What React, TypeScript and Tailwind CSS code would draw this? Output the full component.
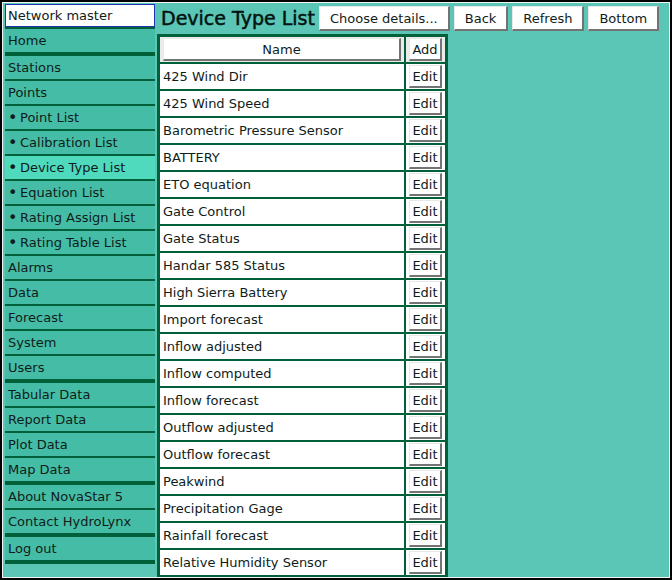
type NavItem = { label: string; sub?: boolean; active?: boolean; groupEnd?: boolean };

const navItems: NavItem[] = [
  { label: "Home", groupEnd: true },
  { label: "Stations" },
  { label: "Points" },
  { label: "Point List", sub: true },
  { label: "Calibration List", sub: true },
  { label: "Device Type List", sub: true, active: true },
  { label: "Equation List", sub: true },
  { label: "Rating Assign List", sub: true },
  { label: "Rating Table List", sub: true },
  { label: "Alarms" },
  { label: "Data" },
  { label: "Forecast" },
  { label: "System" },
  { label: "Users", groupEnd: true },
  { label: "Tabular Data" },
  { label: "Report Data" },
  { label: "Plot Data" },
  { label: "Map Data", groupEnd: true },
  { label: "About NovaStar 5" },
  { label: "Contact HydroLynx", groupEnd: true },
  { label: "Log out", groupEnd: true },
];

const deviceTypes = [
  "425 Wind Dir",
  "425 Wind Speed",
  "Barometric Pressure Sensor",
  "BATTERY",
  "ETO equation",
  "Gate Control",
  "Gate Status",
  "Handar 585 Status",
  "High Sierra Battery",
  "Import forecast",
  "Inflow adjusted",
  "Inflow computed",
  "Inflow forecast",
  "Outflow adjusted",
  "Outflow forecast",
  "Peakwind",
  "Precipitation Gage",
  "Rainfall forecast",
  "Relative Humidity Sensor",
];

const bevel =
  "border-t border-l border-r-2 border-b-2 border-t-[#e6e9e7] border-l-[#e6e9e7] border-r-[#737373] border-b-[#737373] bg-white pt-[2px] leading-[18px] whitespace-nowrap";

function ToolbarButton({ label }: { label: string }) {
  return (
    <button type="button" className={`${bevel} h-[25px] px-[10px]`}>
      {label}
    </button>
  );
}

function CellButton({ label }: { label: string }) {
  return (
    <button type="button" className={`${bevel} block h-[23px] w-full text-center`}>
      {label}
    </button>
  );
}

function Sidebar() {
  return (
    <nav className="w-[150px] shrink-0">
      <div className="border-b-2 border-[#00603a]">
        <div className="h-[23px] border border-[#2036b0] bg-white px-[2px] leading-[22px]">Network master</div>
      </div>
      <ul>
        {navItems.map((item) => (
          <li
            key={item.label}
            className={`border-[#00603a] ${item.groupEnd ? "border-b-4" : "border-b-2"} ${
              item.active ? "bg-[#4fdabd]" : "bg-[#45bca5]"
            }`}
          >
            <a href="#" className="flex h-[23px] px-[3px] leading-[23px] whitespace-nowrap">
              {item.sub && <span className="w-3 text-base leading-6">•</span>}
              {item.label}
            </a>
          </li>
        ))}
      </ul>
    </nav>
  );
}

export default function App() {
  return (
    <div className="h-screen border-2 border-black bg-[#5cc6b6] font-['DejaVu_Sans',sans-serif] text-[13px] text-[#101c1a]">
      <div className="flex h-full gap-[2px] overflow-hidden border border-[#eef5f3] pt-px pl-[2px]">
        <Sidebar />
        <main className="min-w-0 flex-1">
          <header className="flex h-[30px] items-start gap-1 pt-[2px] pl-1">
            <h1 className="text-[19px] leading-6 font-normal whitespace-nowrap text-[#031410] [-webkit-text-stroke:0.5px_#031410]">
              Device Type List
            </h1>
            <ToolbarButton label="Choose details..." />
            <ToolbarButton label="Back" />
            <ToolbarButton label="Refresh" />
            <ToolbarButton label="Bottom" />
          </header>
          <table className="w-[291px] table-fixed border-separate border-spacing-[2px] border border-[#00603a] bg-[#00603a]">
            <colgroup>
              <col />
              <col className="w-[39px]" />
            </colgroup>
            <thead>
              <tr className="bg-[#e9ece9]">
                <th className="px-[3px] py-px font-normal">
                  <CellButton label="Name" />
                </th>
                <th className="px-[3px] py-px font-normal">
                  <CellButton label="Add" />
                </th>
              </tr>
            </thead>
            <tbody>
              {deviceTypes.map((name) => (
                <tr key={name} className="bg-white">
                  <td className="px-[3px] py-px whitespace-nowrap">{name}</td>
                  <td className="px-[3px] py-px">
                    <CellButton label="Edit" />
                  </td>
                </tr>
              ))}
            </tbody>
          </table>
        </main>
      </div>
    </div>
  );
}
